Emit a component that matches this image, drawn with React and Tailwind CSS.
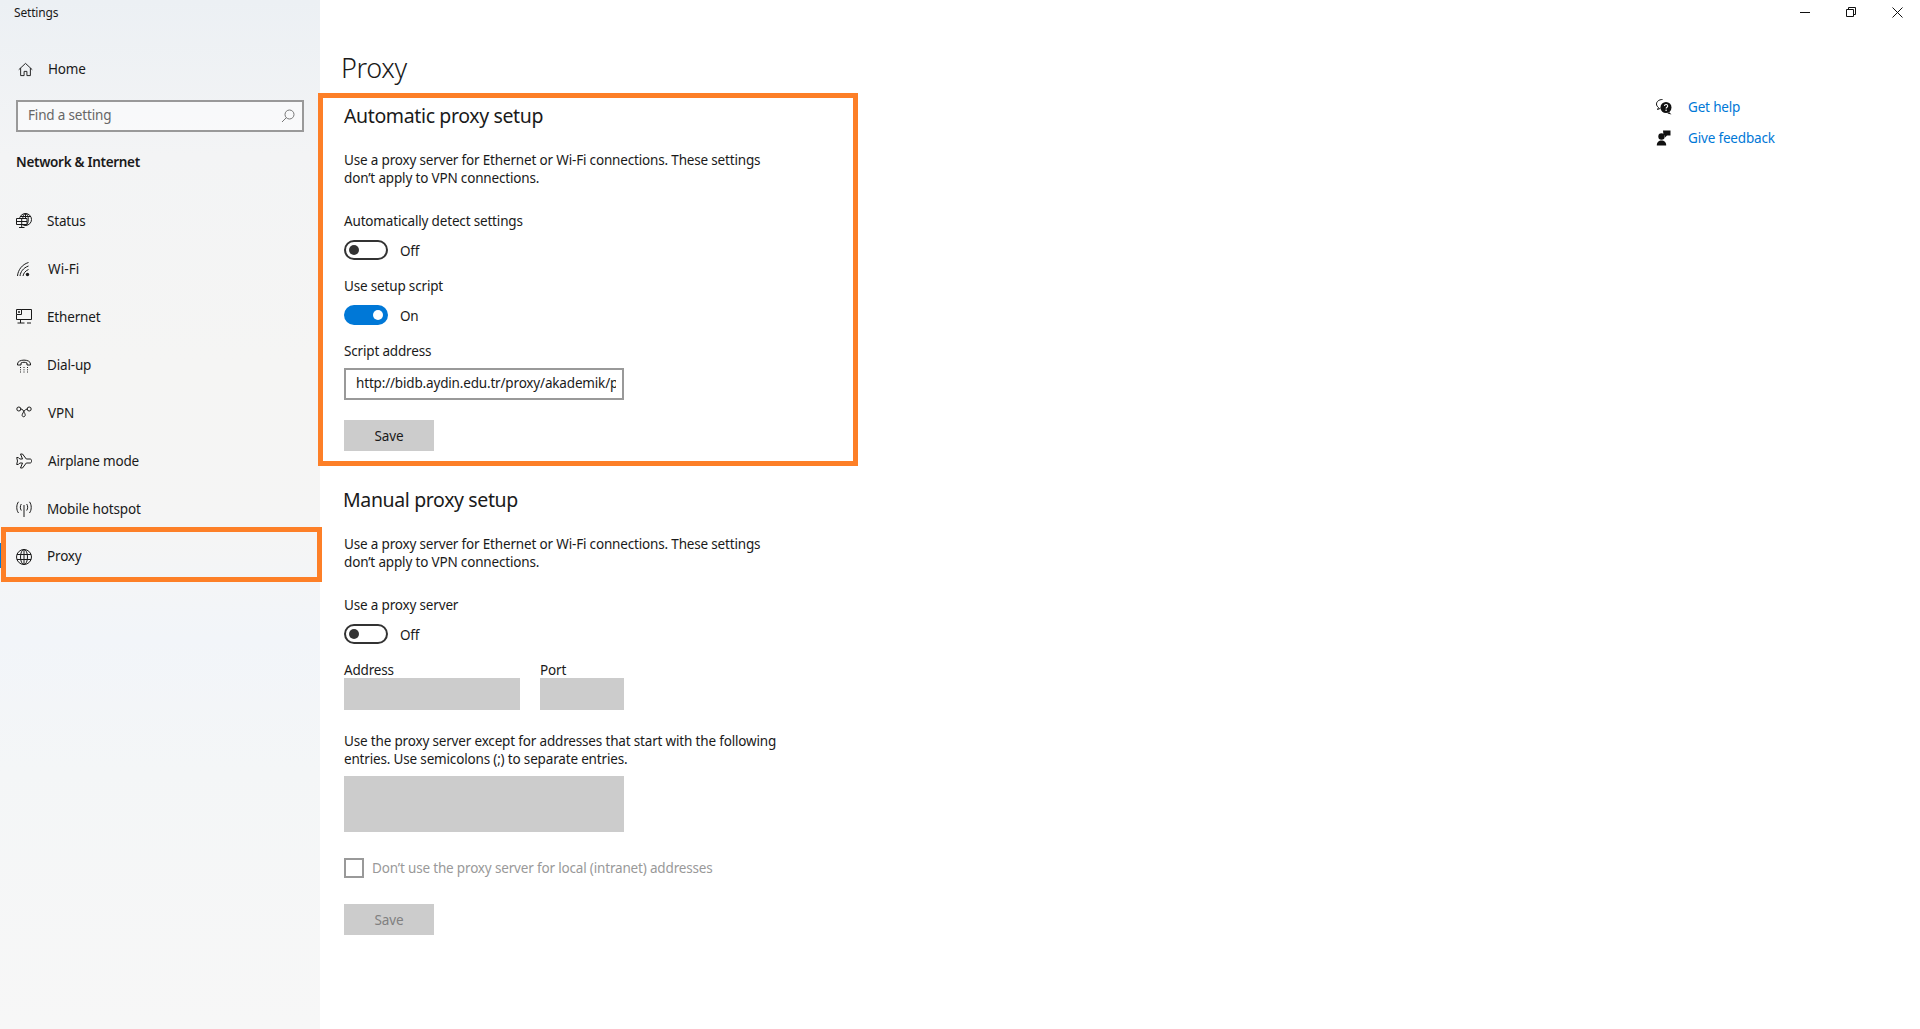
import React from "react";

const S = ({ children, w = 16, h = 16, vb = "0 0 16 16", cls = "" }) => (
  <svg width={w} height={h} viewBox={vb} fill="none" stroke="#1a1a1a" strokeWidth="1" className={cls}>{children}</svg>
);

const icons = {
  home: <S><path d="M.8 8.200 8 1.500l7.200 6.700" /><path d="M2.800 6.500v8h3.700V10h3v4.500h3.700v-8" /></S>,
  status: (
    <S>
      <circle cx="9.500" cy="6.500" r="6" />
      <ellipse cx="9.500" cy="6.500" rx="2.800" ry="6" />
      <path d="M4 3.500h11M9.500.5v5" />
      <path d="M.5 5.500h10.500v6H.5z" fill="#f5f5f5" />
      <path d="M.5 8.500H11M5.700 5.500v6M5.700 11.500v3M3 14.500h5.500" />
    </S>
  ),
  wifi: <S><path d="M1.500 15C2 9 6 3.500 12.500 1.500" /><path d="M4 15C4.500 11 7 7 12.500 5" /><path d="M7 15C7.500 12.500 9 10 12.500 8.500" /><circle cx="11.500" cy="13.500" r="1.700" fill="#1a1a1a" stroke="none" /></S>,
  ethernet: <S><path d="M3 .5h12.500v10H.5M4.500 10.500v3.500M1.500 14h7" /><path d="M.5 .5h5v5h-5z" fill="#f5f5f5" /><path d="M.5 5.500v5M2.500 2.500h1v1h-1z" /><path d="M11 14h4" /></S>,
  dial: <S><path d="M1.500 7C1.500 1.800 14.500 1.800 14.500 7v1h-3.500V6C9 5 7 5 5 6v2H1.500z" /><path d="M4 10.500h1M7.500 10.500h1M11 10.500h1M4 12.800h1M7.500 12.800h1M11 12.800h1M4 15h1M7.500 15h1M11 15h1" /></S>,
  vpn: <S strokeWidth="1.100"><circle cx="2.800" cy="4" r="2" /><circle cx="13.200" cy="4" r="2" /><path d="M4.800 4c2 0 2.500 1.500 3.500 3.500.8 1.500 1.500 3 .2 4-1.300.8-2.800-.4-2.300-1.800C7 7.500 9 4 11.200 4" /></S>,
  plane: <S><path d="M4.500 1h2l3.800 5h3.700c1.100 0 1.700.9 1.700 2s-.6 2-1.700 2h-3.700l-3.800 5h-2l2-5H3.800L2.300 11.500H.7L1.500 8 .7 4.500h1.600L3.800 6h2.700z" /></S>,
  hotspot: <S><path d="M8 4v12" /><path d="M5.300 3c-1.300 2-1.300 4.500 0 6.500M10.700 3c1.300 2 1.300 4.500 0 6.500M2.500.8C.2 3.800.2 9 2.500 12M13.500.8c2.300 3 2.300 8.200 0 11.200" /></S>,
  globe: <S><circle cx="8" cy="8" r="7.500" /><ellipse cx="8" cy="8" rx="3.500" ry="7.500" /><path d="M1 5.500h14M1 10.500h14M8 .5v15" /></S>,
};

const nav = [
  ["status", "Status", "ml-[15px]"],
  ["wifi", "Wi-Fi", "ml-4 tracking-[0.1px]"],
  ["ethernet", "Ethernet", "ml-[15px]"],
  ["dial", "Dial-up", "ml-[15px]"],
  ["vpn", "VPN", "ml-4"],
  ["plane", "Airplane mode", "ml-4"],
  ["hotspot", "Mobile hotspot", "ml-[15px]"],
  ["globe", "Proxy", "ml-[15px] -translate-y-px"],
];

const Toggle = ({ on, label }) => (
  <div className="flex items-center h-5 mt-[10px]">
    {on ? (
      <div className="w-[44px] h-5 rounded-full bg-[#0078d7] flex items-center justify-end pr-[5px]">
        <div className="w-[10px] h-[10px] rounded-full bg-white" />
      </div>
    ) : (
      <div className="w-[44px] h-5 rounded-full border-2 border-[#333333] flex items-center pl-[3px]">
        <div className="w-[10px] h-[10px] rounded-full bg-[#333333]" />
      </div>
    )}
    <span className="ml-3 leading-5 translate-y-px">{label}</span>
  </div>
);

const H2 = ({ cls, children }) => (
  <h2 className={"text-[19.5px] leading-7 font-normal tracking-[-0.37px] " + cls}>{children}</h2>
);

export default function App() {
  return (
    <div className="flex h-[1029px] w-[1920px] overflow-hidden bg-white text-[13.5px] leading-[18px] text-[#1a1a1a] font-['Noto_Sans',sans-serif] tracking-[-0.17px]">
      <aside className="w-[320px] shrink-0 bg-[linear-gradient(180deg,#ecf0f4_0%,#f3f4f5_15%,#f5f5f4_35%,#f5f5f5_52%,#f2f5f9_62%,#f4f6f7_75%,#f7f7f7_100%)]">
        <div className="h-[26px] pl-[14px] flex items-center text-[12px]">Settings</div>
        <div className="mt-[19px] h-12 flex items-center pl-[18px]">
          {React.cloneElement(icons.home, { w: 15, h: 15 })}
          <span className="ml-[15px]">Home</span>
        </div>
        <div className="mt-[7px] mx-4 h-8 border-2 border-[#999999] bg-white/50 flex items-center justify-between pl-[10px] pr-[7px] text-[#666666]">
          <span className="-translate-y-px">Find a setting</span>
          <svg width="14" height="14" viewBox="0 0 14 14" fill="none" stroke="#777777"><circle cx="8.500" cy="5.500" r="4.500" /><path d="M5.500 8.500 1 13" /></svg>
        </div>
        <div className="mt-[20px] pl-4 h-5 flex items-center font-semibold tracking-[-0.3px]">Network &amp; Internet</div>
        <nav className="mt-[25px]">
          {nav.map(([ic, label, textCls]) => (
            <div key={label} className="relative h-12 flex items-center pl-4">
              <span className="w-4 h-4 flex items-center justify-center">{icons[ic]}</span>
              <span className={textCls}>{label}</span>
              {label === "Proxy" && (
                <>
                  <span className="absolute left-0 top-[10px] w-[1px] h-[25px] bg-[#0078d7]" />
                  <span className="absolute left-[1px] top-[-6px] w-[321px] h-[55px] border-[5px] border-[#fd7f27] z-10" />
                </>
              )}
            </div>
          ))}
        </nav>
      </aside>

      <main className="flex-1 pl-6 pt-[46px]">
        <h1 className="-ml-[3px] h-11 flex items-center text-[27px] font-light tracking-[-0.4px] leading-[44px]">Proxy</h1>
        <section className="relative mt-[3px] -ml-[26px] w-[540px] border-[5px] border-[#fd7f27] pl-[21px] pt-1 pb-[10px]">
          <H2 cls="">Automatic proxy setup</H2>
          <p className="mt-[21px]">Use a proxy server for Ethernet or Wi-Fi connections. These settings<br />don’t apply to VPN connections.</p>
          <div className="mt-[25px]">Automatically detect settings</div>
          <Toggle label="Off" />
          <div className="mt-[17px]">Use setup script</div>
          <Toggle on label="On" />
          <div className="mt-[17px]">Script address</div>
          <div className="mt-2 w-[280px] h-8 border-2 border-[#999999] pl-[10px] pr-[6px] flex items-center">
            <span className="block overflow-hidden whitespace-nowrap -translate-y-px">http://bidb.aydin.edu.tr/proxy/akademik/proxy.pac</span>
          </div>
          <div className="mt-5 w-[90px] h-[31px] bg-[#cccccc] flex items-center justify-center">Save</div>
        </section>

        <H2 cls="mt-5 -ml-[1px]">Manual proxy setup</H2>
        <p className="mt-[21px]">Use a proxy server for Ethernet or Wi-Fi connections. These settings<br />don’t apply to VPN connections.</p>
        <div className="mt-[25px]">Use a proxy server</div>
        <Toggle label="Off" />
        <div className="mt-[17px] flex gap-5">
          <div className="w-[176px]">
            <div className="h-[17px]">Address</div>
            <div className="h-8 bg-[#cccccc]" />
          </div>
          <div className="w-[84px]">
            <div className="h-[17px]">Port</div>
            <div className="h-8 bg-[#cccccc]" />
          </div>
        </div>
        <p className="mt-[22px]">Use the proxy server except for addresses that start with the following<br />entries. Use semicolons (;) to separate entries.</p>
        <div className="mt-2 w-[280px] h-14 bg-[#cccccc]" />
        <div className="mt-[26px] flex items-center h-5">
          <div className="w-5 h-5 border-2 border-[#999999]" />
          <span className="ml-2 text-[#999999]">Don’t use the proxy server for local (intranet) addresses</span>
        </div>
        <div className="mt-[26px] w-[90px] h-[31px] bg-[#cccccc] text-[#808080] flex items-center justify-center">Save</div>
      </main>

      <aside className="w-[264px] shrink-0">
        <div className="flex justify-end h-6">
          <div className="w-[46px] flex items-center justify-center">
            <svg width="10" height="10" viewBox="0 0 10 10" stroke="#111111"><path d="M0 5.500h10" /></svg>
          </div>
          <div className="w-[46px] flex items-center justify-center">
            <svg width="10" height="10" viewBox="0 0 10 10" fill="none" stroke="#111111"><path d="M.5 2.500h7v7h-7zM2.500 2.500V.5h7v7h-2" /></svg>
          </div>
          <div className="w-[46px] flex items-center justify-center">
            <svg width="11" height="11" viewBox="0 0 11 11" fill="none" stroke="#111111"><path d="M.5.5l10 10M10.500.5l-10 10" /></svg>
          </div>
        </div>
        <div className="mt-[67px] text-[#0078d7]">
          <div className="h-[31px] flex items-center">
            <svg width="16" height="16" viewBox="0 0 16 16" className="shrink-0">
              <path d="M6.500.5C3 .5.500 2.500.500 5c0 1.500.8 2.700 2 3.500L1.500 10.500l3-1.200" fill="none" stroke="#111111" />
              <circle cx="10" cy="8.500" r="5.500" fill="#111111" />
              <path d="M13 13l2.500 2.500-4-1z" fill="#111111" />
              <path d="M8.500 7c0-2 3.200-2 3.200 0 0 1.300-1.600 1.200-1.600 2.500" fill="none" stroke="#ffffff" strokeWidth="1.100" />
              <circle cx="10.100" cy="11.300" r=".8" fill="#ffffff" />
            </svg>
            <span className="ml-4">Get help</span>
          </div>
          <div className="h-[31px] flex items-center">
            <svg width="16" height="16" viewBox="0 0 16 16" className="shrink-0">
              <circle cx="5.500" cy="6.500" r="3.200" fill="#111111" />
              <path d="M.8 15.500c0-3.500 2-5 4.700-5s4.700 1.500 4.700 5z" fill="#111111" />
              <path d="M7 .5h7.500v5H11L9 7.500V5.500H7.500z" fill="#111111" />
            </svg>
            <span className="ml-4">Give feedback</span>
          </div>
        </div>
      </aside>
    </div>
  );
}
